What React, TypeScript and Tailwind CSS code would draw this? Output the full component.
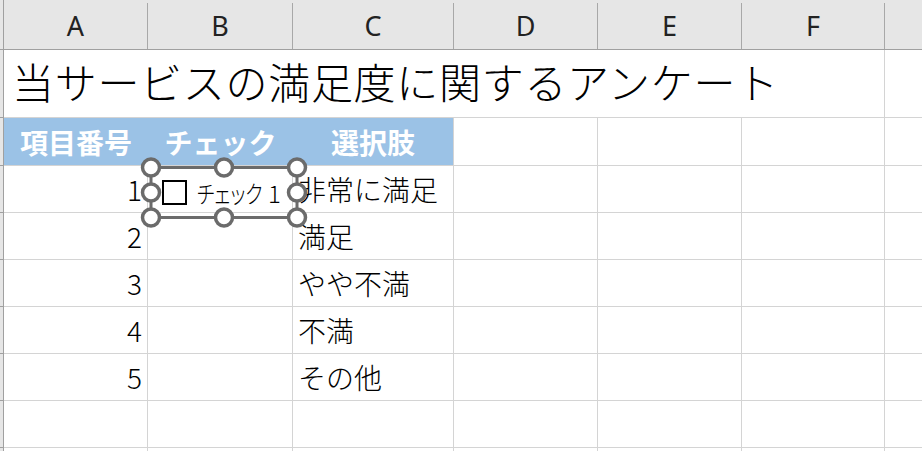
import React from "react";

const jp = "font-['Noto_Sans_CJK_JP','Noto_Sans',sans-serif]";

function Strip({ last }: { last?: boolean }) {
  return (
    <div
      className={
        "w-[4px] shrink-0 bg-[#e6e6e6] border-r border-[#a0a0a0] " +
        (last ? "" : "border-b")
      }
    />
  );
}

function DataRow({ n, text }: { n?: string; text?: string }) {
  return (
    <div className="flex h-[47px] shrink-0">
      <Strip />
      <div className="w-[144px] shrink-0 flex items-center justify-end pr-[5px] border-r border-b border-[#d4d4d4] text-[28px] font-light text-black">
        {n}
      </div>
      <div className="w-[145px] shrink-0 border-r border-b border-[#d4d4d4]" />
      <div className="w-[161px] shrink-0 flex items-center pl-[5px] border-r border-b border-[#d4d4d4] text-[28px] font-light text-black whitespace-nowrap">
        {text}
      </div>
      <div className="w-[144px] shrink-0 border-r border-b border-[#d4d4d4]" />
      <div className="w-[144px] shrink-0 border-r border-b border-[#d4d4d4]" />
      <div className="w-[143px] shrink-0 border-r border-b border-[#d4d4d4]" />
      <div className="flex-1 border-b border-[#d4d4d4]" />
    </div>
  );
}

export default function App() {
  const rows: [string, string][] = [
    ["1", "非常に満足"],
    ["2", "満足"],
    ["3", "やや不満"],
    ["4", "不満"],
    ["5", "その他"],
  ];
  return (
    <div
      className={
        "relative w-[922px] h-[451px] overflow-hidden bg-white flex flex-col " +
        jp
      }
    >
      {/* Column header */}
      <div className="flex h-[50px] shrink-0 bg-[#e6e6e6] border-b border-[#a0a0a0] font-['Noto_Sans','Noto_Sans_CJK_JP',sans-serif] text-[27px] text-[#222]">
        <div className="w-[4px] shrink-0 border-r border-[#a0a0a0]" />
        <div className="w-[144px] shrink-0 mt-[3px] flex items-center justify-center border-r border-[#a8a8a8]">
          A
        </div>
        <div className="w-[145px] shrink-0 mt-[3px] flex items-center justify-center border-r border-[#a8a8a8]">
          B
        </div>
        <div className="w-[161px] shrink-0 mt-[3px] flex items-center justify-center border-r border-[#a8a8a8]">
          C
        </div>
        <div className="w-[144px] shrink-0 mt-[3px] flex items-center justify-center border-r border-[#a8a8a8]">
          D
        </div>
        <div className="w-[144px] shrink-0 mt-[3px] flex items-center justify-center border-r border-[#a8a8a8]">
          E
        </div>
        <div className="w-[143px] shrink-0 mt-[3px] flex items-center justify-center border-r border-[#a8a8a8]">
          F
        </div>
        <div className="flex-1" />
      </div>

      {/* Title row */}
      <div className="flex h-[68px] shrink-0">
        <Strip />
        <div className="w-[881px] shrink-0 flex items-center pl-[8px] pb-[6px] border-r border-b border-[#d4d4d4] text-[42px] font-light tracking-[0.7px] leading-none text-black whitespace-nowrap">
          当サービスの満足度に関するアンケート
        </div>
        <div className="flex-1 border-b border-[#d4d4d4]" />
      </div>

      {/* Blue header row */}
      <div className="flex h-[48px] shrink-0">
        <Strip />
        <div className="w-[144px] shrink-0 flex items-center justify-center bg-[#9bc2e6] border-b border-[#d4d4d4] text-[28px] font-bold text-white">
          項目番号
        </div>
        <div className="w-[145px] shrink-0 flex items-center justify-center bg-[#9bc2e6] border-b border-[#d4d4d4] text-[28px] font-bold text-white">
          チェック
        </div>
        <div className="w-[161px] shrink-0 flex items-center justify-center bg-[#9bc2e6] border-r border-b border-[#d4d4d4] text-[28px] font-bold text-white">
          選択肢
        </div>
        <div className="w-[144px] shrink-0 border-r border-b border-[#d4d4d4]" />
        <div className="w-[144px] shrink-0 border-r border-b border-[#d4d4d4]" />
        <div className="w-[143px] shrink-0 border-r border-b border-[#d4d4d4]" />
        <div className="flex-1 border-b border-[#d4d4d4]" />
      </div>

      {rows.map(([n, t]) => (
        <DataRow key={n} n={n} text={t} />
      ))}
      <DataRow />
      <DataRow />

      {/* Checkbox form control (selected) */}
      <div className="absolute left-[162px] top-[180px] w-[25px] h-[25px] border-2 border-black" />
      <div className="absolute left-[197px] top-[179px] h-[28px] leading-[28px] text-[24px] font-light text-black whitespace-nowrap [font-feature-settings:'palt'] origin-left scale-x-[0.8]">
        チェック
      </div>
      <div className="absolute left-[268px] top-[179px] h-[28px] leading-[28px] text-[24px] font-light text-black">
        1
      </div>
      <svg
        className="absolute left-[138px] top-[154px]"
        width="174"
        height="76"
        viewBox="0 0 174 76"
      >
        <rect
          x="13"
          y="13.5"
          width="146"
          height="50"
          fill="none"
          stroke="#6b6b6b"
          strokeWidth="3"
        />
        {[
          [13, 13.5],
          [86, 13.5],
          [159, 13.5],
          [13, 38.5],
          [159, 38.5],
          [13, 63.5],
          [86, 63.5],
          [159, 63.5],
        ].map(([x, y], i) => (
          <circle
            key={i}
            cx={x}
            cy={y}
            r="8.5"
            fill="#ffffff"
            stroke="#6b6b6b"
            strokeWidth="3.5"
          />
        ))}
      </svg>
    </div>
  );
}
